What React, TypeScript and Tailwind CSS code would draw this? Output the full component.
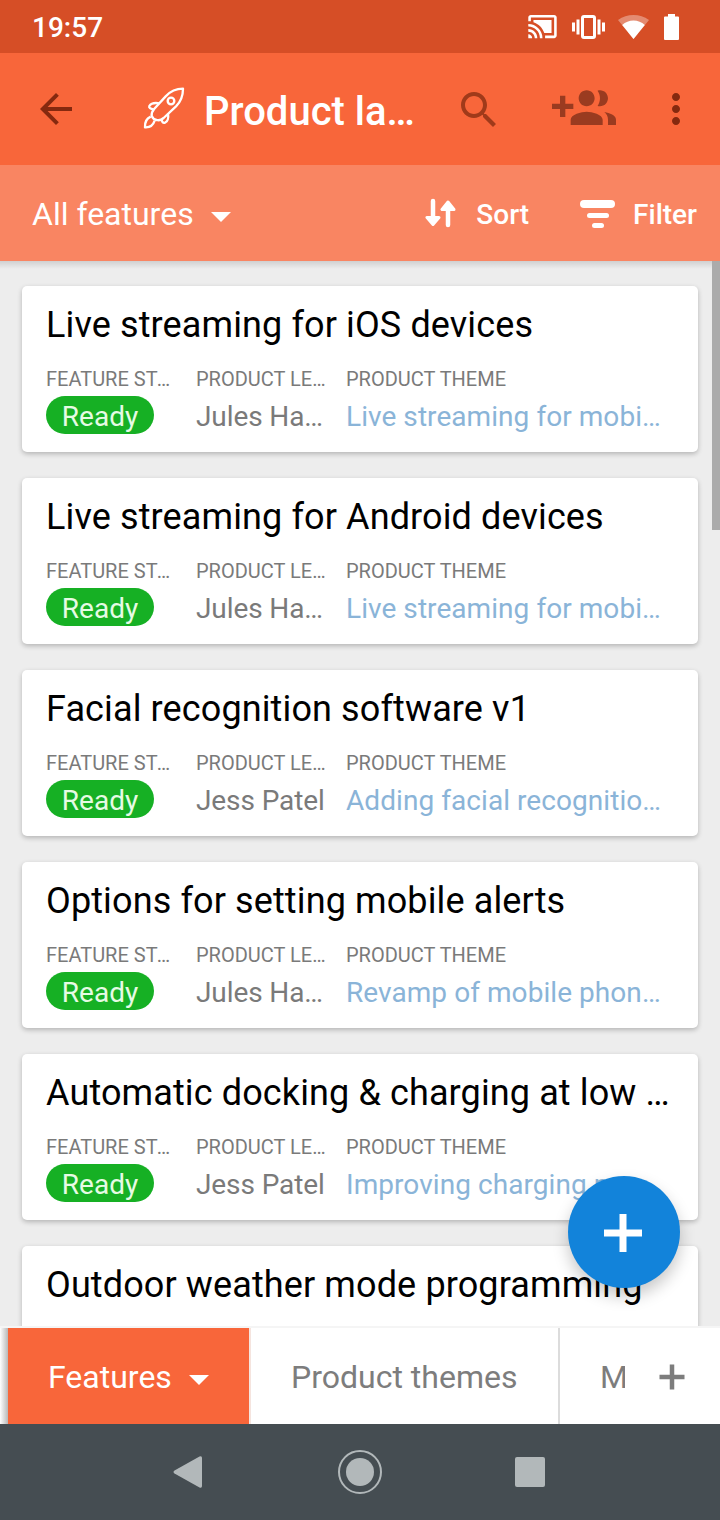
import type { ReactNode } from 'react';

type Feature = {
    title: string;
    lead: string;
    theme: string;
};

const features: Feature[] = [
    { title: 'Live streaming for iOS devices', lead: 'Jules Harrison', theme: 'Live streaming for mobile devices' },
    { title: 'Live streaming for Android devices', lead: 'Jules Harrison', theme: 'Live streaming for mobile devices' },
    { title: 'Facial recognition software v1', lead: 'Jess Patel', theme: 'Adding facial recognition software' },
    { title: 'Options for setting mobile alerts', lead: 'Jules Harrison', theme: 'Revamp of mobile phone app' },
    { title: 'Automatic docking & charging at low power', lead: 'Jess Patel', theme: 'Improving charging process' },
];

// 24-unit material glyph
const Glyph = ({ d, className }: { d: string; className: string }) => (
    <svg viewBox="0 0 24 24" fill="currentColor" className={`shrink-0 ${className}`}>
        <path d={d} />
    </svg>
);

const Caret = ({ className = '' }: { className?: string }) => (
    <svg viewBox="0 0 20 10" fill="currentColor" className={`h-[10px] w-5 shrink-0 ${className}`}>
        <path d="M0 0h20L10 10z" />
    </svg>
);

const Rocket = () => (
    <svg viewBox="426 260 132 132" fill="none" stroke="currentColor" strokeWidth="7" strokeLinejoin="round" className="h-11 w-11 shrink-0">
        <path d="M549 265c-20 0-38 8-52 23l-34 37c-6 7-9 15-8 22 3 7 8 11 15 12 7 2 14 0 21-6l37-35c14-14 21-32 21-53z" />
        <circle cx="513" cy="302" r="10" />
        <path d="M478 309c-12-2-25 0-30 8-2 5 3 9 13 10" />
        <path d="M504 340c2 12-1 24-9 27-6 2-10-3-10-10" />
        <path d="M452 349c-13 6-18 17-17 32 14 1 24-5 29-20" />
    </svg>
);

const StatusBar = () => (
    <div className="flex h-[53px] items-center bg-[#d64e26] pl-8 pr-[41px] text-white">
        <span className="flex-1 pt-0.5 text-[28px] font-medium leading-8">19:57</span>
        <Glyph
            className="mr-[14px] h-[31px] w-[31px]"
            d="M1 18v3h3c0-1.66-1.34-3-3-3zm0-4v2c2.76 0 5 2.24 5 5h2c0-3.87-3.13-7-7-7zm18-7H5v1.63c3.96 1.28 7.09 4.41 8.37 8.37H19V7zM1 10v2c4.97 0 9 4.03 9 9h2c0-6.08-4.93-11-11-11zm20-7H3c-1.1 0-2 .9-2 2v3h2V5h18v14h-7v2h7c1.1 0 2-.9 2-2V5c0-1.1-.9-2-2-2z"
        />
        <svg viewBox="0 0 33 24" fill="currentColor" className="mr-[13px] h-6 w-[33px] shrink-0">
            <path d="M0 7.500h3v9H0zM4.500 4.500h3v15h-3zM25.500 4.500h3v15h-3zM30 7.500h3v9h-3z" />
            <rect x="10.500" y="1.500" width="12" height="21" rx="1.500" fill="none" stroke="currentColor" strokeWidth="3" />
        </svg>
        <svg viewBox="0 0 31 24" fill="currentColor" className="mr-[15px] h-6 w-[31px] shrink-0">
            <path opacity="0.35" d="M0 5Q7 0 15.500 0T31 5L15.500 24z" />
            <path d="M4.200 10Q9 5.500 15.500 5.500T26.800 10L15.500 24z" />
        </svg>
        <svg viewBox="0 0 15 26" fill="currentColor" className="h-[26px] w-[15px] shrink-0">
            <path d="M4 0h7v2.500h3q1 0 1 1V25q0 1-1 1H1q-1 0-1-1V3.500q0-1 1-1h3z" />
        </svg>
    </div>
);

const TopBar = () => (
    <div className="flex h-28 items-center bg-[#f8663a] pl-8 pr-5 text-[#85290f]">
        <Glyph className="mr-[62px] h-12 w-12" d="M20 11H7.830l5.590-5.590L12 4l-8 8 8 8 1.410-1.410L7.830 13H20v-2z" />
        <div className="flex w-[313px] items-center text-white">
            <Rocket />
            <h1 className="ml-[18px] w-[222px] truncate pt-1.5 text-[40px] font-medium leading-[48px]">Product launch</h1>
        </div>
        <Glyph
            className="mr-[49px] mt-px h-12 w-12 text-[#a03a1a]"
            d="M15.500 14h-.79l-.28-.27C15.410 12.590 16 11.110 16 9.500 16 5.910 13.090 3 9.500 3S3 5.910 3 9.500 5.910 16 9.500 16c1.610 0 3.090-.59 4.230-1.570l.27.280v.790l5 4.990L20.490 19l-4.990-5zm-6 0C7.010 14 5 11.990 5 9.500S7.010 5 9.500 5 14 7.010 14 9.500 11.990 14 9.500 14z"
        />
        <Glyph
            className="mr-9 h-16 w-16 text-[#9a3b20]"
            d="M8 10H5V7H3v3H0v2h3v3h2v-3h3v-2zm10 1c1.660 0 2.990-1.340 2.990-3S19.660 5 18 5c-.32 0-.63.05-.91.14.57.81.9 1.790.9 2.860s-.34 2.040-.9 2.860c.28.090.59.140.91.140zm-5 0c1.660 0 2.990-1.340 2.990-3S14.660 5 13 5c-1.660 0-3 1.340-3 3s1.340 3 3 3zm6.620 2.160c.83.730 1.380 1.660 1.380 2.840v2h3v-2c0-1.540-2.370-2.490-4.380-2.840zM13 13c-2 0-6 1-6 3v2h12v-2c0-2-4-3-6-3z"
        />
        <Glyph
            className="h-12 w-12"
            d="M12 8c1.100 0 2-.9 2-2s-.9-2-2-2-2 .9-2 2 .9 2 2 2zm0 2c-1.100 0-2 .9-2 2s.9 2 2 2 2-.9 2-2-.9-2-2-2zm0 6c-1.100 0-2 .9-2 2s.9 2 2 2 2-.9 2-2-.9-2-2-2z"
        />
    </div>
);

const ViewBar = () => (
    <div className="flex h-24 items-center bg-[#f98562] pl-8 pr-6 pt-0.5 text-white">
        <span className="text-[32px] leading-10">All features</span>
        <Caret className="ml-[17px] mt-1.5" />
        <div className="ml-auto -mr-px flex items-center text-[28px] font-medium leading-8">
            <svg viewBox="0 0 31 31" fill="none" stroke="currentColor" strokeLinecap="round" strokeLinejoin="round" className="-mt-0.5 h-[31px] w-[31px] shrink-0">
                <path strokeWidth="4.500" d="M8 3v18M23 10v17" />
                <path fill="currentColor" strokeWidth="3" d="M2 19.500h12L8 26.500zM17 11.500h12L23 4z" />
            </svg>
            <span className="ml-5 pt-0.5">Sort</span>
            <div className="-mt-px ml-[51px] flex w-[35px] flex-col items-center">
                <span className="h-2 w-[35px] rounded-full bg-white" />
                <span className="mt-[5px] h-[5px] w-[22px] rounded-full bg-white" />
                <span className="mt-[5px] h-[5px] w-3 rounded-full bg-white" />
            </div>
            <span className="ml-[18px] pt-0.5">Filter</span>
        </div>
    </div>
);

const Field = ({ label, children }: { label: string; children: ReactNode }) => (
    <div className="min-w-0">
        <div className="truncate text-[20px] leading-6 text-[#7a7a7a]">{label}</div>
        <div className="mt-[5px] text-[28px] leading-[42px]">{children}</div>
    </div>
);

const FeatureCard = ({ feature }: { feature: Feature }) => (
    <article className="h-[166px] shrink-0 rounded-[5px] bg-white px-6 pt-[19px] shadow-[0_2px_5px_rgba(0,0,0,0.24)]">
        <h2 className="truncate text-[36px] leading-10 tracking-[0.12px] text-black">{feature.title}</h2>
        <div className="mt-[22px] grid grid-cols-[134px_134px_318px] gap-4">
            <Field label="FEATURE STATUS">
                <span className="block h-[38px] w-[108px] rounded-full bg-[#16b024] text-center text-[#e6fbe4]">Ready</span>
            </Field>
            <Field label="PRODUCT LEAD">
                <span className="block truncate tracking-[-0.1px] text-[#7a7a7a]">{feature.lead}</span>
            </Field>
            <Field label="PRODUCT THEME">
                <span className="block truncate tracking-[0.06px] text-[#8ab4d8]">{feature.theme}</span>
            </Field>
        </div>
    </article>
);

const TableTabs = () => (
    <div className="flex h-24 bg-white text-[32px] leading-10 text-[#7d7d7d]">
        <div className="w-2 bg-linear-to-r from-white to-[#b8b8b8]" />
        <div className="flex w-[241px] items-center bg-[#f8663a] pl-10 pt-0.5 text-white">
            Features
            <Caret className="ml-[17px] mt-1.5" />
        </div>
        <div className="flex w-[311px] items-center border-l-2 border-r-2 border-l-[#f5e4de] border-r-[#dcdcdc] pl-10 pt-0.5">Product themes</div>
        <div className="flex w-[65px] items-center overflow-hidden pl-10 pt-0.5">Milestones</div>
        <div className="flex flex-1 items-center pl-[34px] pt-px">
            <svg viewBox="0 0 26 26" stroke="currentColor" strokeWidth="4.500" className="h-[26px] w-[26px]">
                <path d="M0.500 13h25M13 0.500v25" />
            </svg>
        </div>
    </div>
);

const SystemNav = () => (
    <div className="flex h-24 items-center bg-[#454d52] text-[#b2b8ba]">
        <svg viewBox="0 0 29 32" fill="currentColor" className="ml-[173px] h-8 w-[29px]">
            <path d="M1.500 14.500L26.500 0.500Q29 -0.500 29 2V30Q29 32.500 26.500 31.500L1.500 17.500Q-0.500 16 1.500 14.500z" />
        </svg>
        <div className="ml-[136px] flex h-11 w-11 items-center justify-center rounded-full border-2 border-[#b2b8ba]">
            <span className="h-7 w-7 rounded-full bg-[#b2b8ba]" />
        </div>
        <span className="ml-[133px] h-[30px] w-[30px] rounded-[2px] bg-[#b2b8ba]" />
    </div>
);

export default function App() {
    return (
        <div className="flex h-[1520px] w-[720px] flex-col overflow-hidden bg-white font-['Roboto',sans-serif]">
            <StatusBar />
            <TopBar />
            <ViewBar />

            {/* Feature list */}
            <main className="relative flex min-h-0 flex-1 flex-col gap-[26px] overflow-hidden bg-[#ededed] px-[22px] pt-[25px]">
                <div className="absolute inset-x-0 top-0 h-2 bg-linear-to-b from-black/12 to-transparent" />
                {features.map((feature) => (
                    <FeatureCard key={feature.title} feature={feature} />
                ))}
                {/* Last row is still scrolling in, only its title is visible */}
                <article className="h-[82px] shrink-0 rounded-t-[5px] bg-white px-6 pt-[19px] shadow-[0_2px_5px_rgba(0,0,0,0.24)]">
                    <h2 className="truncate text-[36px] leading-10 tracking-[0.12px] text-black">Outdoor weather mode programming</h2>
                </article>
                <span className="absolute right-0 top-0 h-[269px] w-2 bg-[#ababab]" />
                <div className="absolute inset-x-0 bottom-0 h-0.5 bg-[#f5f5f5]" />
                <button className="absolute bottom-10 right-10 flex h-28 w-28 items-center justify-center rounded-full bg-[#1283da] text-white shadow-[0_8px_16px_rgba(0,0,0,0.22)]">
                    <svg viewBox="0 0 38 38" stroke="currentColor" strokeWidth="7" className="mr-0.5 mt-0.5 h-[38px] w-[38px]">
                        <path d="M0 19h38M19 0v38" />
                    </svg>
                </button>
            </main>

            <TableTabs />
            <SystemNav />
        </div>
    );
}
